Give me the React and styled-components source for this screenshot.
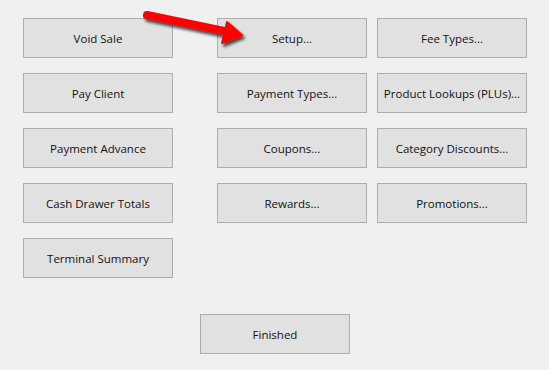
import React from 'react'
import styled, { createGlobalStyle } from 'styled-components'

const GlobalStyle = createGlobalStyle`
  html, body {
    margin: 0;
    padding: 0;
    background: #f0f0f0;
  }
  body {
    font-family: "Open Sans", "Noto Sans", sans-serif;
  }
`

const Screen = styled.div`
  position: relative;
  width: 549px;
  height: 370px;
  background: #f0f0f0;
  box-sizing: border-box;
  padding: 18px 0 0 23px;
  display: flex;
  flex-direction: column;
`

const Columns = styled.div`
  display: flex;
  gap: 44px;
`

const Group = styled.div`
  display: flex;
  gap: 10px;
`

const Column = styled.div`
  display: flex;
  flex-direction: column;
  gap: 15px;
`

const Button = styled.button`
  width: 150px;
  height: 40px;
  box-sizing: border-box;
  background: #e1e1e1;
  border: 1px solid #adadad;
  border-radius: 0;
  color: #111;
  font-family: "Open Sans", "Noto Sans", sans-serif;
  font-size: 11.5px;
  padding: 0;
  white-space: nowrap;
  cursor: default;
`

const Footer = styled.div`
  display: flex;
  justify-content: center;
  margin-top: 36px;
  padding-right: 23px;
  & > button {
    margin-left: 1px;
  }
`

const Arrow = styled.svg`
  position: absolute;
  left: 138px;
  top: 4px;
  overflow: visible;
`

const col1 = ['Void Sale', 'Pay Client', 'Payment Advance', 'Cash Drawer Totals', 'Terminal Summary']
const col2 = ['Setup...', 'Payment Types...', 'Coupons...', 'Rewards...']
const col3 = ['Fee Types...', 'Product Lookups (PLUs)...', 'Category Discounts...', 'Promotions...']

function App() {
  return (
    <>
      <GlobalStyle />
      <Screen>
        <Columns>
          <Column>
            {col1.map(t => <Button key={t}>{t}</Button>)}
          </Column>
          <Group>
            <Column>
              {col2.map(t => <Button key={t}>{t}</Button>)}
            </Column>
            <Column>
              {col3.map(t => <Button key={t}>{t}</Button>)}
            </Column>
          </Group>
        </Columns>
        <Footer>
          <Button>Finished</Button>
        </Footer>
        <Arrow width="110" height="45" viewBox="0 0 110 45">
          <defs>
            <filter id="sh" x="-20%" y="-40%" width="140%" height="180%">
              <feGaussianBlur in="SourceAlpha" stdDeviation="1.5" />
              <feOffset dx="2" dy="3" result="b" />
              <feComponentTransfer>
                <feFuncA type="linear" slope="0.7" />
              </feComponentTransfer>
              <feMerge>
                <feMergeNode />
                <feMergeNode in="SourceGraphic" />
              </feMerge>
            </filter>
          </defs>
          <g filter="url(#sh)">
            <line x1="9" y1="11" x2="86" y2="27" stroke="#ff0000" strokeWidth="8" strokeLinecap="round" />
            <polygon points="89,18 104,31 84,39" fill="#ff0000" stroke="#ff0000" strokeWidth="2" strokeLinejoin="round" />
          </g>
        </Arrow>
      </Screen>
    </>
  )
}

export default App
